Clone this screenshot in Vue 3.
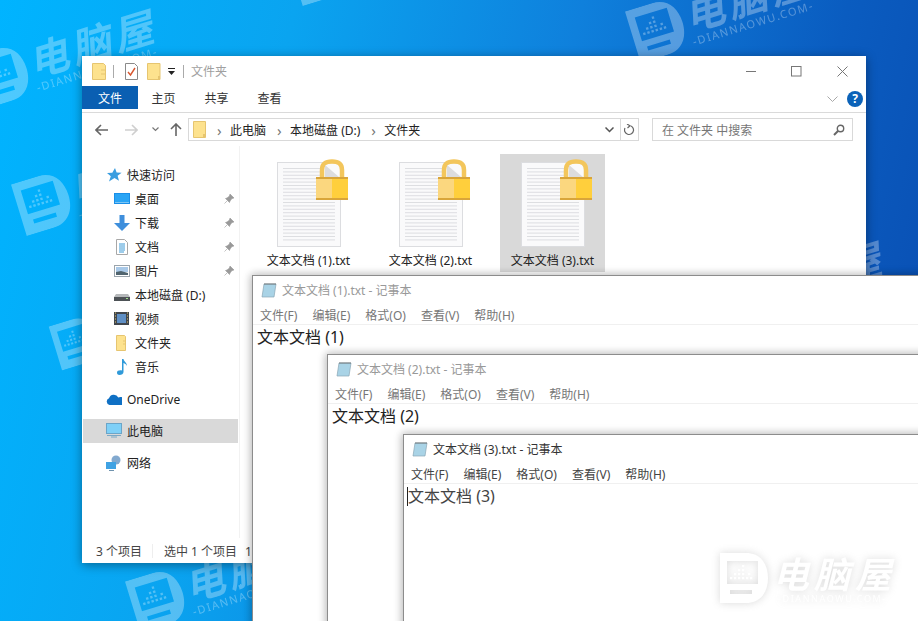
<script setup>
const marks = [
  { x: -33, y: 58, s: 1 }, { x: 285, y: -45, s: 1 }, { x: 623, y: 12, s: 1 }, { x: 9, y: 185, s: 1 },
  { x: 47, y: 327, s: .85 }, { x: 695, y: 290, s: 1 }, { x: 123, y: 582, s: 1 }
]
const icons = {
  star: '<path d="M9 1l1.600 4.600 5 .2-4 3 1.400 5L8.500 11 3 14.500l1.800-5.300L1 6l5.300-.2z" fill="#3a9ee0"/>',
  desktop: '<rect x="0" y="2" width="16" height="11" fill="#1a8fe8"/><rect x="1" y="3" width="14" height="8" fill="#2aa5f5"/><rect x="1" y="11" width="14" height="1" fill="#7cc6f5"/>',
  download: '<path d="M5.500 0h5v8H16l-8 8-8-8h5.500z" fill="#3f8fdc"/>',
  doc: '<path d="M2.500 .5h8l3 3v12h-11z" fill="#fff" stroke="#a8a8a8"/><path d="M5 5h6M5 7h6M5 9h6M5 11h6M5 13h5" stroke="#3d9ad6"/>',
  pic: '<rect x=".5" y="2.500" width="15" height="11" fill="#fff" stroke="#9aa4ac"/><rect x="2" y="4" width="12" height="5" fill="#a9c9e8"/><path d="M2 9l5-1 7 2v2H2z" fill="#51656f"/>',
  disk: '<path d="M2 7h12l2 3v3H0v-3z" fill="#b5b8ba"/><rect x="0" y="10" width="16" height="4" fill="#4d5256"/><rect x="12" y="11" width="2" height="1" fill="#9fe08a"/>',
  video: '<rect x="0" y="1" width="15" height="13" fill="#40464d"/><rect x="3" y="3" width="9" height="9" fill="#5f8fc4"/><path d="M1 2h1M1 5h1M1 8h1M1 11h1M13 2h1M13 5h1M13 8h1M13 11h1" stroke="#e3c770"/>',
  folder: '<path d="M2.500 .5h8l1 1v14h-9z" fill="#fde28e" stroke="#e6c570"/><path d="M9 6h2.500M9 9h2.500" stroke="#e6c570"/>',
  music: '<path d="M8 0h1.500c.5 3 3.500 3.500 3.500 7-1-2-2-2.500-3.500-3V13c0 2-2 3-4 3S3 15 3 13.500 5 11 8 11.500z" fill="#2f9ad9"/>',
  cloud: '<path d="M3.500 14A3.500 3.500 0 0 1 3 7.300 5 5 0 0 1 12.300 6.500 3.800 3.800 0 0 1 16.500 14z" fill="#0f70c4"/>',
  pc: '<rect x=".5" y=".5" width="15" height="10" fill="#7fd0f7" stroke="#6ba5c8"/><path d="M5 14h6M1 12.500h14" stroke="#7aa8c5"/>',
  net: '<circle cx="10" cy="5" r="4.500" fill="#82a9cf"/><rect x="0" y="7" width="10" height="7" fill="#3fa2e3"/><path d="M3 15.500h5" stroke="#6f92ad"/>'
}
const groups = [
  { top: [{ label: '快速访问', icon: 'star' }], items: [
    { label: '桌面', icon: 'desktop', pin: true }, { label: '下载', icon: 'download', pin: true },
    { label: '文档', icon: 'doc', pin: true }, { label: '图片', icon: 'pic', pin: true },
    { label: '本地磁盘 (D:)', icon: 'disk' }, { label: '视频', icon: 'video' },
    { label: '文件夹', icon: 'folder' }, { label: '音乐', icon: 'music' }
  ] },
  { top: [{ label: 'OneDrive', icon: 'cloud' }], items: [] },
  { top: [{ label: '此电脑', icon: 'pc', active: true }], items: [] },
  { top: [{ label: '网络', icon: 'net' }], items: [] }
]
const files = [
  { name: '文本文档 (1).txt' }, { name: '文本文档 (2).txt' }, { name: '文本文档 (3).txt', selected: true }
]
const lines = Array.from({ length: 22 }, (_, i) => 9.5 + i * 3.4)
const notes = [
  { n: 1, x: 252, y: 275 }, { n: 2, x: 327, y: 354 }, { n: 3, x: 403, y: 434, active: true }
]
const menu = ['文件(F)', '编辑(E)', '格式(O)', '查看(V)', '帮助(H)']
const dots = [[22,12],[18,16],[22,16],[14,20],[18,20],[22,20],[28,20],[10,24],[14,24],[18,24],[22,24],[26,24],[30,24]]
</script>

<template>
  <div class="desktop">
    <div v-for="(m, i) in marks" :key="i" class="mark" :style="{ left: m.x + 'px', top: m.y + 'px', transform: `rotate(-17deg) scale(${m.s})` }">
      <svg class="d" viewBox="0 0 48 50" width="56" height="54">
        <path fill-rule="evenodd" d="M0 0H26C40 0 48 10 48 25S40 50 26 50H0ZM7 8V31H38V8ZM10 37V41H32V37Z" fill="#fff"/>
        <rect v-for="(p, k) in dots" :key="k" :x="p[0]" :y="p[1]" width="2.200" height="2.200" fill="#fff"/>
      </svg>
      <div class="mark-text">
        <div class="mark-cn">电脑屋</div>
        <div class="mark-en">-DIANNAOWU.COM-</div>
      </div>
    </div>

    <section class="explorer">
      <header class="titlebar">
        <svg class="q" width="14" height="17" viewBox="0 0 14 17"><path d="M.5.5h11l2 2v14H.5z" fill="#fde28e" stroke="#e6c570"/><path d="M9 7h4M9 11h4" stroke="#e6c570"/></svg>
        <i class="vsep first"></i>
        <svg class="q check" width="13" height="17" viewBox="0 0 13 17"><path d="M.5.5h9l3 3v13H.5z" fill="#fff" stroke="#8a8a8a"/><path d="M3 9l2.500 3L10 5" fill="none" stroke="#d8552e" stroke-width="1.400"/></svg>
        <svg class="q fold2" width="14" height="17" viewBox="0 0 14 17"><path d="M.5.5h12.500v16H.5z" fill="#fde28e" stroke="#e6c570"/><path d="M11 13h2v3h-2z" fill="#e6c570"/></svg>
        <svg class="q drop" width="7" height="7" viewBox="0 0 7 7"><path d="M0 0h7v1H0zM0 3h7L3.500 7z" fill="#222"/></svg>
        <i class="vsep second"></i>
        <span class="wintitle">文件夹</span>
        <div class="wincontrols">
          <svg width="10" height="10" viewBox="0 0 10 10"><path d="M0 5.500h10" stroke="#777"/></svg>
          <svg width="11" height="11" viewBox="0 0 11 11"><rect x=".5" y=".5" width="9.500" height="9.500" fill="none" stroke="#777"/></svg>
          <svg width="11" height="11" viewBox="0 0 11 11"><path d="M.5.5l10 10M10.500.5l-10 10" stroke="#777"/></svg>
        </div>
      </header>

      <nav class="ribbon">
        <span class="tab file">文件</span>
        <span class="tab">主页</span>
        <span class="tab">共享</span>
        <span class="tab">查看</span>
        <svg class="collapse" width="11" height="6" viewBox="0 0 11 6"><path d="M.5.5l5 5 5-5" fill="none" stroke="#a8a8a8"/></svg>
        <span class="help">?</span>
      </nav>

      <div class="addressrow">
        <div class="navbtns">
          <svg width="13" height="12" viewBox="0 0 13 12"><path d="M6 1L1 6l5 5M1 6h12" fill="none" stroke="#666" stroke-width="1.600"/></svg>
          <svg width="13" height="12" viewBox="0 0 13 12"><path d="M7 1l5 5-5 5M12 6H0" fill="none" stroke="#cfcfcf" stroke-width="1.600"/></svg>
          <svg width="7" height="5" viewBox="0 0 7 5"><path d="M.5.5l3 3 3-3" fill="none" stroke="#777" stroke-width="1.200"/></svg>
          <svg width="12" height="13" viewBox="0 0 12 13"><path d="M1 6l5-5 5 5M6 1v12" fill="none" stroke="#666" stroke-width="1.600"/></svg>
        </div>
        <div class="address">
          <svg width="13" height="17" viewBox="0 0 13 17"><path d="M.5.5h12v16H.5z" fill="#fde28e" stroke="#e6c570"/><path d="M10 13h2.500v3H10z" fill="#e6c570"/></svg>
          <span class="chev">›</span><span>此电脑</span>
          <span class="chev">›</span><span>本地磁盘 (D:)</span>
          <span class="chev">›</span><span>文件夹</span>
          <svg class="addr-drop" width="9" height="6" viewBox="0 0 9 6"><path d="M.5.5l4 4 4-4" fill="none" stroke="#555" stroke-width="1.500"/></svg>
          <div class="refresh">
            <svg width="11" height="12" viewBox="0 0 11 12"><path d="M5 1.500a4.500 4.500 0 1 1-4 2.500M3 0l3 1.800L3.500 4" fill="none" stroke="#666" stroke-width="1.200"/></svg>
          </div>
        </div>
        <div class="search">
          <span>在 文件夹 中搜索</span>
          <svg width="12" height="12" viewBox="0 0 12 12"><circle cx="7.500" cy="4.500" r="3.200" fill="none" stroke="#666" stroke-width="1.400"/><path d="M5 7l-4 4" stroke="#666" stroke-width="2"/></svg>
        </div>
      </div>

      <div class="body">
        <aside class="sidebar">
          <div v-for="(g, gi) in groups" :key="gi" class="group">
            <div v-for="t in g.top" :key="t.label" class="row top" :class="{ active: t.active }">
              <svg width="16" height="16" viewBox="0 0 16 16" v-html="icons[t.icon]"></svg>
              <span>{{ t.label }}</span>
            </div>
            <div v-for="it in g.items" :key="it.label" class="row sub">
              <svg width="16" height="16" viewBox="0 0 16 16" v-html="icons[it.icon]"></svg>
              <span>{{ it.label }}</span>
              <svg v-if="it.pin" class="pin" width="10" height="10" viewBox="0 0 10 10"><path d="M6 0l4 4-2 .5-2 2.500-.5 1.500L1.500 4.500 3 4l2.500-2zM3 7L.5 9.500" fill="#999" stroke="#999" stroke-width=".6"/></svg>
            </div>
          </div>
        </aside>
        <main class="files">
          <div v-for="f in files" :key="f.name" class="tile" :class="{ selected: f.selected }">
            <svg class="fileicon" width="72" height="88" viewBox="0 0 72 88">
              <rect x=".5" y="3.500" width="63" height="84" fill="#fafafb" stroke="#dcdde0"/>
              <path v-for="l in lines" :key="l" :d="`M6 ${l}H${l < 30 ? 46 : 58}`" stroke="#d6d7da" stroke-width=".8"/>
              <path d="M45 18V11C45 4 49 2.500 55 2.500S65 4 65 11v7" fill="none" stroke="#f3c65c" stroke-width="4.500"/>
              <path d="M48 6l14 12H48z" fill="#dcdcde"/>
              <rect x="39" y="18" width="16" height="23" fill="#fbd77f"/>
              <rect x="55" y="18" width="16" height="23" fill="#ffcf3c"/>
              <path d="M39 19h32M39 40h32" stroke="#d9a53a" stroke-width="2"/>
            </svg>
            <span>{{ f.name }}</span>
          </div>
        </main>
      </div>

      <footer class="status">
        <span>3 个项目</span><i></i><span>选中 1 个项目</span><span class="size">1 字节</span>
      </footer>
    </section>

    <section v-for="n in notes" :key="n.n" class="note" :class="{ active: n.active }" :style="{ left: n.x + 'px', top: n.y + 'px' }">
      <header class="note-title">
        <svg width="16" height="16" viewBox="0 0 16 16"><path d="M3 2h12l-2 13H1z" fill="#a9d3e6" stroke="#8aa6b5" stroke-width=".7"/><path d="M4 1v2M6 1v2M8 1v2M10 1v2M12 1v2M14 1v2" stroke="#666" stroke-width=".8"/></svg>
        <span>文本文档 ({{ n.n }}).txt - 记事本</span>
      </header>
      <div class="note-menu"><span v-for="m in menu" :key="m">{{ m }}</span></div>
      <div class="note-text"><i v-if="n.active" class="caret"></i>文本文档 ({{ n.n }})</div>
    </section>

    <div class="brand">
      <svg class="d" viewBox="0 0 48 50" width="48" height="50">
        <path fill-rule="evenodd" d="M0 0H26C40 0 48 10 48 25S40 50 26 50H0ZM7 8V31H38V8ZM10 37V41H32V37Z" fill="#fff"/>
        <rect v-for="(p, k) in dots" :key="k" :x="p[0]" :y="p[1]" width="2.200" height="2.200" fill="#fff"/>
      </svg>
      <div class="brand-text">
        <div class="brand-cn">电脑屋</div>
        <div class="brand-en">-DIANNAOWU.COM-</div>
      </div>
    </div>
  </div>
</template>

<style>
html, body { margin: 0; overflow: hidden; }
</style>

<style scoped>
.desktop {
  position: relative; width: 918px; height: 621px; overflow: hidden;
  background: linear-gradient(103deg, #00b4ff 0%, #0aa4f0 28%, #0f80dc 55%, #0a5cc0 80%, #0a4cb0 100%);
  font: 12px "Noto Sans", "Noto Sans CJK SC", sans-serif; color: #222;
}
i { font-style: normal; display: block; }
svg { flex: none; display: block; }
.mark {
  position: absolute; display: flex; gap: 2px; align-items: flex-start;
  transform-origin: 0 0; opacity: .3; color: #fff;
}
.mark-cn { font: italic 700 40px/42px "Noto Sans CJK SC", sans-serif; letter-spacing: 4px; white-space: nowrap; }
.mark-en { font: 11px/13px "Noto Sans", sans-serif; letter-spacing: 1.500px; white-space: nowrap; }

.explorer {
  position: absolute; left: 82px; top: 56px; width: 784px; height: 507px;
  background: #fff; box-shadow: 0 2px 10px rgba(0, 0, 0, .4);
  display: flex; flex-direction: column;
}
.titlebar { height: 30px; display: flex; align-items: center; padding-left: 10px; flex: none; }
.vsep { width: 1px; height: 13px; background: #aaa; }
.vsep.first { margin-left: 7px; }
.check { margin-left: 11px; }
.fold2 { margin-left: 9px; }
.drop { margin-left: 7px; }
.vsep.second { margin-left: 8px; }
.wintitle { margin-left: 7px; color: #a0a0a0; }
.wincontrols { margin-left: auto; margin-right: 18px; display: flex; gap: 35px; align-items: center; }
.ribbon {
  height: 26px; flex: none; display: flex; align-items: flex-start; border-bottom: 1px solid #dadada;
  box-sizing: content-box; color: #333;
}
.tab { width: 53px; height: 23px; padding-right: 2px; box-sizing: border-box; line-height: 25px; text-align: center; }
.tab.file { width: 56px; padding-right: 0; background: #0a5fb2; color: #fff; }
.collapse { margin: 10px 0 0 auto; }
.help {
  width: 16px; height: 16px; margin: 5px 3px 0 9px; border-radius: 50%; background: #0b62b8; color: #fff;
  font: 700 12px/16px "Noto Sans", sans-serif; text-align: center;
}
.addressrow { height: 33px; flex: none; display: flex; align-items: center; box-sizing: border-box; }
.navbtns { width: 106px; display: flex; align-items: center; padding-left: 13px; box-sizing: border-box; gap: 0; }
.navbtns svg:nth-child(2) { margin-left: 17px; }
.navbtns svg:nth-child(3) { margin-left: 14px; }
.navbtns svg:nth-child(4) { margin-left: 11px; }
.address {
  width: 451px; height: 23px; border: 1px solid #d9d9d9; box-sizing: border-box; display: flex; align-items: center;
  padding-left: 4px; gap: 10px; color: #222;
}
.chev { width: 3px; color: #777; font-size: 15px; line-height: 18px; margin-left: 1px; }
.addr-drop { margin-left: auto; margin-right: 2px; }
.refresh { width: 17px; height: 21px; border-left: 1px solid #d9d9d9; margin-left: -6px; display: flex; align-items: center; justify-content: center; }
.search {
  width: 201px; height: 23px; margin-left: 13px; border: 1px solid #d9d9d9; box-sizing: border-box;
  display: flex; align-items: center; justify-content: space-between; padding: 0 7px 0 9px; color: #777;
}
.body { flex: 1; display: flex; min-height: 0; }
.sidebar { width: 158px; flex: none; padding-top: 17px; box-sizing: border-box; border-right: 1px solid #f2f2f2; }
.group { margin-bottom: 8px; }
.row { height: 24px; display: flex; align-items: center; gap: 5px; color: #222; }
.row.top { padding-left: 24px; }
.row.sub { padding-left: 32px; gap: 5px; }
.row.active { background: #d9d9d9; height: 24px; margin: 0 1px; padding-left: 23px; width: 155px; box-sizing: border-box; }
.pin { margin-left: auto; margin-right: 5px; }
.files { flex: 1; display: flex; align-items: flex-start; padding: 8px 0 0 16px; gap: 17px; }
.tile { width: 105px; height: 118px; display: flex; flex-direction: column; align-items: center; position: relative; }
.tile.selected { background: #d9d9d9; }
.fileicon { margin: 5px 0 0 21px; align-self: flex-start; }
.tile span { position: absolute; top: 98px; left: 0; right: 0; text-align: center; white-space: nowrap; line-height: 18px; }
.status { height: 25px; flex: none; display: flex; align-items: center; padding-left: 14px; color: #444; }
.status i { width: 1px; height: 14px; background: #eee; margin: 0 11px 0 10px; }
.size { margin-left: 8px; }

.note {
  position: absolute; width: 700px; height: 500px; background: #fff; border: 1px solid #8c8c8c; border-right: 0;
  box-sizing: border-box; box-shadow: -2px 0 8px rgba(0, 0, 0, .18), 0 -2px 8px rgba(0, 0, 0, .12); color: #999;
}
.note-title { height: 28px; display: flex; align-items: center; gap: 5px; padding-left: 8px; }
.note-menu {
  height: 21px; display: flex; gap: 15px; padding: 1px 0 0 7px; box-sizing: border-box; align-items: center; border-bottom: 1px solid #f0f0f0;
  color: #777;
}
.note-text { position: relative; font-size: 16px; line-height: 24px; padding-left: 4px; color: #222; }
.note.active { color: #333; }
.note.active .note-menu { color: #444; }
.note.active .note-text { color: #444; }
.caret { position: absolute; left: 3px; top: 3px; width: 1px; height: 19px; background: #222; }

.brand {
  position: absolute; left: 720px; top: 553px; display: flex; gap: 5px; color: #fff;
  filter: drop-shadow(0 0 4px rgba(160, 160, 160, .4));
}
.brand-cn { font: italic 700 36px/36px "Noto Sans CJK SC", sans-serif; letter-spacing: 5px; white-space: nowrap; margin-top: 1px; }
.brand-en { font: 9px/12px "Noto Sans", sans-serif; letter-spacing: 1.600px; margin: 3px 0 0 5px; white-space: nowrap; }
</style>
